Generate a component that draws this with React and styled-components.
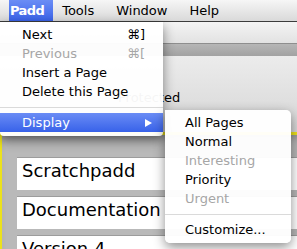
import React from 'react';
import styled, { createGlobalStyle } from 'styled-components';

const GlobalStyle = createGlobalStyle`
    body {
        margin: 0;
        font-family: "DejaVu Sans", Verdana, sans-serif;
        overflow: hidden;
    }
`;

const Screen = styled.div`
    position: relative;
    width: 297px;
    height: 249px;
    overflow: hidden;
    background: #b8b8b8;
    color: #000;
`;

const MenuBar = styled.div`
    display: flex;
    height: 21px;
    border-bottom: 1px solid #3c3c3c;
    background: linear-gradient(#f6f6f6, #d9d9d9);
    font-size: 13px;
    line-height: 22px;
    padding-left: 9px;
`;

const BarItem = styled.div`
    padding: ${p => (p.app ? '0 9px 0 1px' : '0 22px 0 0')};
    margin-left: ${p => (p.first ? '9px' : '0')};
    font-weight: ${p => (p.app ? 'bold' : 'normal')};
    letter-spacing: ${p => (p.app ? '-0.6px' : '0')};
    color: ${p => (p.active ? '#fff' : '#000')};
    background: ${p => (p.active ? 'linear-gradient(#6b8df5, #3a63e9)' : 'none')};
`;

const TitleArea = styled.div`
    height: 21px;
    background: linear-gradient(#f4f4f4, #e2e2e2);
`;

const Band = styled.div`
    height: 12px;
    border-top: 1px solid #8e8e8e;
    background: linear-gradient(#b6b6b6, #a2a2a2);
`;

const Panel = styled.div`
    height: 76px;
    box-sizing: border-box;
    padding: 34px 0 0 118px;
    background: linear-gradient(#ececec, #d6d6d6);
    font-size: 13px;
    line-height: 16px;
`;

const Content = styled.div`
    border-top: 3px solid #ece21c;
    border-left: 2px solid #ece21c;
    padding: 22px 0 0 15px;
    height: 120px;
    background: #b9b9b9;
    box-shadow: inset 0 8px 10px -6px rgba(0, 0, 0, 0.25);
`;

const Field = styled.div`
    height: 33px;
    box-sizing: border-box;
    margin-bottom: 6px;
    padding: 4px 0 0 5px;
    background: #fff;
    border-top: 1px solid #9c9c9c;
    font-size: 18px;
    line-height: 18px;
    white-space: nowrap;
`;

const Menu = styled.div`
    position: absolute;
    top: ${p => p.top}px;
    left: ${p => p.left}px;
    width: ${p => p.width}px;
    padding: ${p => (p.sub ? '3px 0 4px' : '3px 0 4px')};
    background: rgba(255, 255, 255, 0.96);
    border-radius: ${p => (p.sub ? '0 5px 5px 5px' : '0 0 4px 4px')};
    box-shadow: 0 4px 12px rgba(0, 0, 0, 0.45);
    font-size: 13px;
`;

const Item = styled.div`
    display: flex;
    align-items: center;
    justify-content: space-between;
    height: 19px;
    line-height: 19px;
    padding: 0 ${p => (p.sub ? '10px' : '18px')} 0 ${p => (p.sub ? '20px' : '22px')};
    color: ${p => (p.selected ? '#fff' : p.disabled ? '#a6a6a6' : '#000')};
    background: ${p => (p.selected ? 'linear-gradient(#6a8cf5, #3862e9)' : 'none')};
    white-space: nowrap;
`;

const Shortcut = styled.span`
    color: ${p => (p.disabled ? '#a6a6a6' : '#000')};
`;

const Arrow = styled.span`
    width: 0;
    height: 0;
    margin-right: -7px;
    border-top: 4px solid transparent;
    border-bottom: 4px solid transparent;
    border-left: 7px solid #fff;
`;

const Separator = styled.div`
    height: 1px;
    margin: 6px 0 5px;
    background: #dadada;
`;

export default function App() {
    return (
        <Screen>
            <GlobalStyle />
            <MenuBar>
                <BarItem app active>Padd</BarItem>
                <BarItem first>Tools</BarItem>
                <BarItem>Window</BarItem>
                <BarItem>Help</BarItem>
            </MenuBar>
            <TitleArea />
            <Band />
            <Panel>Protected</Panel>
            <Content>
                <Field>Scratchpadd</Field>
                <Field>Documentation</Field>
                <Field>Version 4</Field>
            </Content>

            <Menu top={22} left={0} width={163}>
                <Item>Next<Shortcut>⌘]</Shortcut></Item>
                <Item disabled>Previous<Shortcut disabled>⌘[</Shortcut></Item>
                <Item>Insert a Page</Item>
                <Item>Delete this Page</Item>
                <Separator />
                <Item selected>Display<Arrow /></Item>
            </Menu>

            <Menu sub top={110} left={165} width={126}>
                <Item sub>All Pages</Item>
                <Item sub>Normal</Item>
                <Item sub disabled>Interesting</Item>
                <Item sub>Priority</Item>
                <Item sub disabled>Urgent</Item>
                <Separator />
                <Item sub>Customize...</Item>
            </Menu>
        </Screen>
    );
}
